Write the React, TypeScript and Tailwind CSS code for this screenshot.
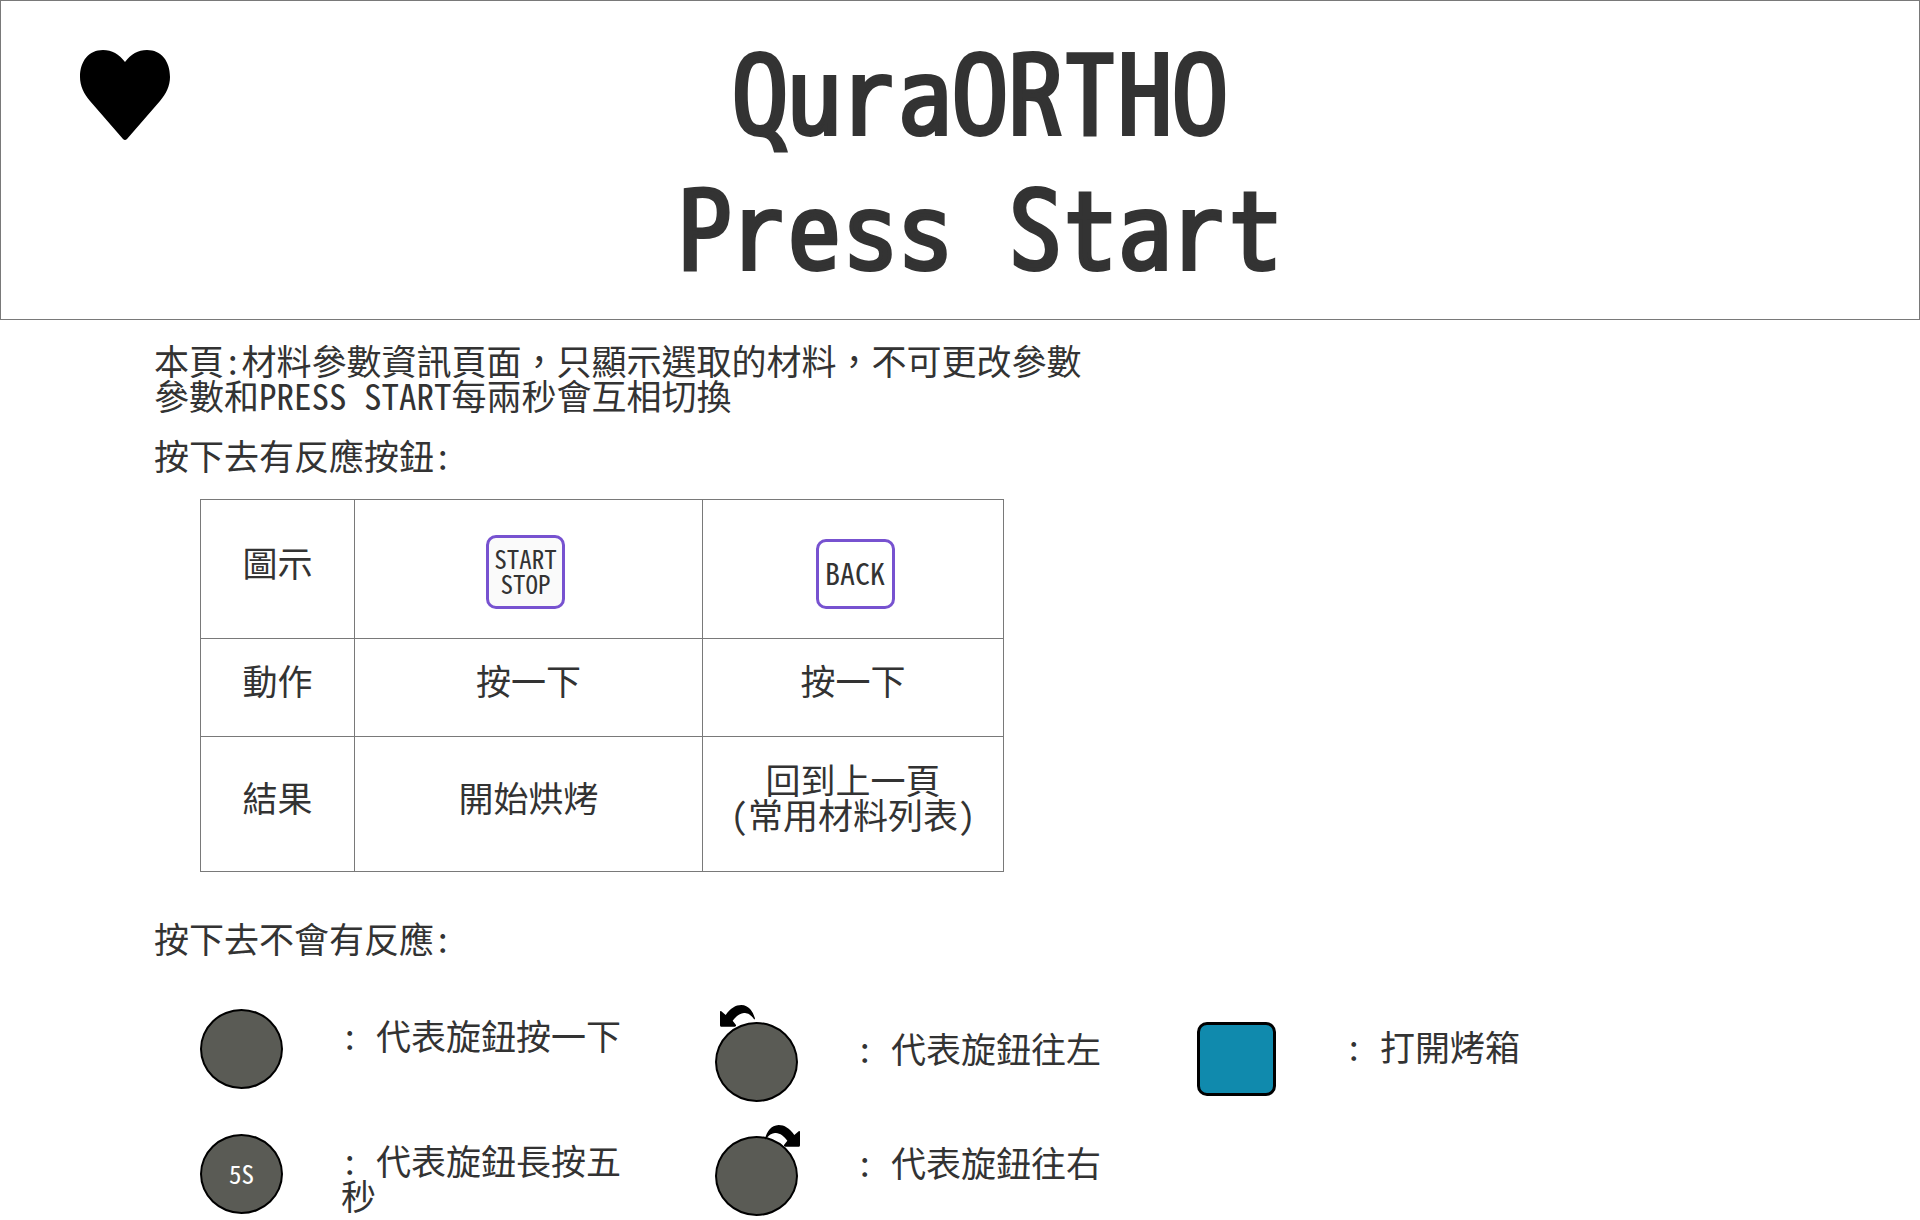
import type { ReactNode } from 'react';

function Heart() {
  return (
    <svg viewBox="0 0 90 90" className="h-[90px] w-[90px]" aria-hidden="true">
      <path d="M45 12C39 4 32 0 23 0C9 0 0 11 0 27C0 36 4 44 10 51L43 89Q45 91 47 89L80 51C86 44 90 36 90 27C90 11 81 0 67 0C58 0 51 4 45 12Z" />
    </svg>
  );
}

function TurnArrow({ className }: { className: string }) {
  return (
    <svg viewBox="28 19 105 66" className={`absolute h-[22px] w-[35px] ${className}`} aria-hidden="true">
      <path d="M28 40Q28 35 32 38L45 49C60 28 75 19 92 19C115 20 127 38 133 60C131 64 130 62 128 59C118 45 108 43 100 43C88 43 75 54 66 66L76 79Q77 84 72 84L31 84Q28 84 28 80Z" />
    </svg>
  );
}

function Knob({ children }: { children?: ReactNode }) {
  return (
    <div className="relative flex h-20 w-[83px] shrink-0 items-center justify-center rounded-[50%] border-2 border-black bg-[#5a5b55] pb-[2px] text-[25px] leading-[25px] text-white">
      {children}
    </div>
  );
}

function Legend({ icon, children }: { icon: ReactNode; children: ReactNode }) {
  return (
    <li className="flex h-20 items-start gap-[58px]">
      {icon}
      <p className="max-w-[282px] pt-2">{children}</p>
    </li>
  );
}

const cell = 'border border-[#797979] p-0 pb-4 font-medium';

export default function App() {
  return (
    <div className="min-h-screen bg-white font-['Noto_Sans_Mono_CJK_TC','Noto_Sans_CJK_TC',monospace] text-[35px] leading-[35px] font-medium text-[#333333]">
      <header className="grid grid-cols-[1fr_auto_1fr] border border-[#797979] pt-[31px] pb-[17px] pl-10">
        <div className="pt-[18px] pl-[39px]">
          <Heart />
        </div>
        <h1 className="text-center font-['WenQuanYi_Zen_Hei_Mono','Noto_Sans_Mono_CJK_TC',monospace] text-[110px] leading-[135px] [-webkit-text-stroke:4px]">
          QuraORTHO
          <br />
          Press Start
        </h1>
      </header>

      <main className="pt-[22px] pl-[154px]">
        <p>
          本頁:材料參數資訊頁面，只顯示選取的材料，不可更改參數
          <br />
          參數和PRESS START每兩秒會互相切換
        </p>
        <h2 className="mt-[25px]">按下去有反應按鈕:</h2>

        <table className="mt-[27px] ml-[46px] w-[804px] table-fixed border-collapse text-center">
          <colgroup>
            <col className="w-[154px]" />
            <col className="w-[348px]" />
            <col className="w-[301px]" />
          </colgroup>
          <tbody>
            <tr className="h-[139px]">
              <th scope="row" className={cell}>圖示</th>
              <td className="border border-[#797979] p-0 pr-[6px] pb-[29px] align-bottom">
                <button className="inline-flex h-[74px] w-[79px] items-center justify-center rounded-[10px] border-3 border-[#7752d0] bg-[#fafafa] pb-[2px] align-bottom text-[25px] leading-[25px]">
                  START
                  <br />
                  STOP
                </button>
              </td>
              <td className="border border-[#797979] p-0 pb-[29px] pl-1 align-bottom">
                <button className="inline-flex h-[70px] w-[79px] items-center justify-center rounded-[10px] border-3 border-[#7752d0] bg-white pb-[4px] align-bottom text-[30px] leading-[30px]">
                  BACK
                </button>
              </td>
            </tr>
            <tr className="h-[98px]">
              <th scope="row" className={cell}>動作</th>
              <td className={cell}>按一下</td>
              <td className={cell}>按一下</td>
            </tr>
            <tr className="h-[135px]">
              <th scope="row" className={cell}>結果</th>
              <td className={cell}>開始烘烤</td>
              <td className={cell}>
                回到上一頁
                <br />
                (常用材料列表)
              </td>
            </tr>
          </tbody>
        </table>

        <h2 className="mt-12">按下去不會有反應:</h2>

        <div className="mt-[54px] ml-[46px] flex items-start">
          <ul className="flex w-[515px] flex-col gap-[45px]">
            <Legend icon={<Knob />}>: 代表旋鈕按一下</Legend>
            <Legend icon={<Knob>5S</Knob>}>: 代表旋鈕長按五秒</Legend>
          </ul>
          <ul className="flex w-[482px] flex-col gap-[34px] pt-[13px]">
            <Legend icon={<Knob><TurnArrow className="-top-[19px] left-[3px]" /></Knob>}>: 代表旋鈕往左</Legend>
            <Legend icon={<Knob><TurnArrow className="-top-[13px] left-[48px] -scale-x-100" /></Knob>}>: 代表旋鈕往右</Legend>
          </ul>
          <div className="flex items-start gap-[69px] pt-[13px]">
            <div className="h-[74px] w-[79px] rounded-[10px] border-3 border-black bg-[#108aad]" />
            <p className="pt-[6px]">: 打開烤箱</p>
          </div>
        </div>
      </main>
    </div>
  );
}
